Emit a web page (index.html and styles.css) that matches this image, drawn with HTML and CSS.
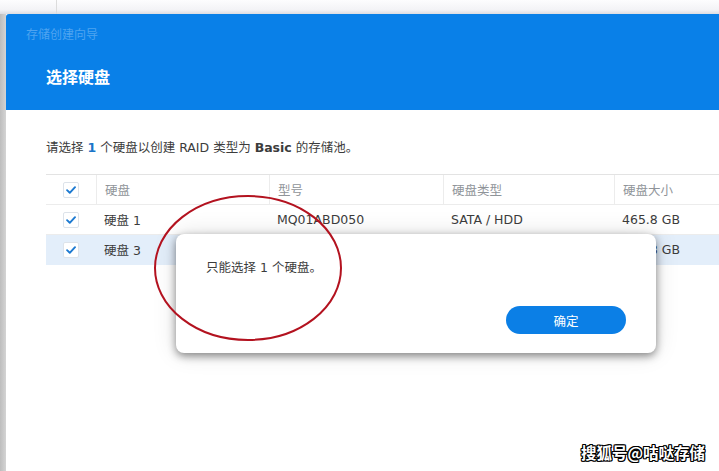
FILE: index.html
```html
<!DOCTYPE html>
<html>
	<head>
		<title>存储创建向导</title>
		<link rel="stylesheet" href="styles.css">
	</head>
	<body>
		<section id="topStrip">
			<div class="stripCell"></div>
		</section>
		<section id="stage">
			<div id="edge"></div>
			<section id="wizard">
				<header id="wizardHeader">
					<div class="wizardName">存储创建向导</div>
					<h1>选择硬盘</h1>
				</header>
				<main id="wizardBody">
					<p class="intro">请选择 <b class="num">1</b> 个硬盘以创建 RAID 类型为 <b>Basic</b> 的存储池。</p>
					<div class="diskTable">
						<div class="row head">
							<div class="cell check"><span class="box"><svg viewBox="0 0 16 16"><path d="M3.5 8.2 L6.6 11.2 L12.6 4.8" /></svg></span></div>
							<div class="cell c1">硬盘</div>
							<div class="cell c2">型号</div>
							<div class="cell c3">硬盘类型</div>
							<div class="cell c4">硬盘大小</div>
						</div>
						<div class="row">
							<div class="cell check"><span class="box"><svg viewBox="0 0 16 16"><path d="M3.5 8.2 L6.6 11.2 L12.6 4.8" /></svg></span></div>
							<div class="cell c1">硬盘 1</div>
							<div class="cell c2">MQ01ABD050</div>
							<div class="cell c3">SATA / HDD</div>
							<div class="cell c4">465.8 GB</div>
						</div>
						<div class="row selected">
							<div class="cell check"><span class="box"><svg viewBox="0 0 16 16"><path d="M3.5 8.2 L6.6 11.2 L12.6 4.8" /></svg></span></div>
							<div class="cell c1">硬盘 3</div>
							<div class="cell c2">MQ01ABD050</div>
							<div class="cell c3">SATA / HDD</div>
							<div class="cell c4">465.8 GB</div>
						</div>
					</div>
				</main>
			</section>
		</section>

		<section id="alertBox">
			<p>只能选择 1 个硬盘。</p>
			<div class="actions">
				<button class="okButton">确定</button>
			</div>
		</section>

		<svg id="markCircle" viewBox="0 0 200 150">
			<ellipse cx="100" cy="75" rx="93" ry="72" />
		</svg>

		<div id="watermark">搜狐号@咕哒存储</div>
	</body>
</html>
```

FILE: styles.css
```css
html, body {
	height: 100%;
}

body {
	margin: 0px;
	padding: 0px;
	font-family: "DejaVu Sans", "Noto Sans CJK SC", sans-serif;
	font-size: 12.5px;
	color: #3c3c3c;
	background-color: #fff;
	display: flex;
	flex-direction: column;
	overflow: hidden;
	position: relative;
}

#topStrip {
	height: 14px;
	flex: none;
	background: linear-gradient(#fdfdfe, #f3f3f6 70%, #dcdde2);
	display: flex;
}

.stripCell {
	width: 56px;
	border-right: 1px solid #dcdcdc;
}

#stage {
	flex: 1 0 auto;
	display: flex;
}

#edge {
	width: 6px;
	flex: none;
	background: linear-gradient(90deg, #bdbdbd, #d4d4d4);
}

#wizard {
	flex: 1;
	display: flex;
	flex-direction: column;
	background-color: #fff;
	border-top-left-radius: 3px;
	overflow: hidden;
}

#wizardHeader {
	background-color: #0980e8;
	height: 96px;
	box-sizing: border-box;
	padding: 12px 0 0 20px;
}

.wizardName {
	font-family: "Noto Sans CJK SC", sans-serif;
	font-size: 12px;
	color: #4fa4f0;
	line-height: 16px;
}

#wizardHeader h1 {
	margin: 24px 0 0 20px;
	font-family: "Noto Sans CJK SC", sans-serif;
	font-size: 16px;
	font-weight: 700;
	color: #fff;
	line-height: 20px;
}

#wizardBody {
	padding: 29px 0 0 40px;
}

.intro {
	margin: 0 0 17px 0;
	line-height: 18px;
}

.intro b {
	font-weight: 700;
}

.intro .num {
	color: #1a75c9;
}

.diskTable {
	border-top: 1px solid #e3e3e3;
}

.row {
	display: flex;
	height: 29px;
	border-bottom: 1px solid #ececec;
	align-items: stretch;
}

.row.selected {
	background-color: #e3eefa;
	border-bottom-color: #e3eefa;
}

.cell {
	display: flex;
	align-items: center;
	padding-left: 8px;
	box-sizing: border-box;
	white-space: nowrap;
}

.row.head .cell {
	color: #8f9499;
	border-left: 1px solid #ececec;
}

.row.head .cell.check {
	border-left: none;
}

.cell.check {
	width: 50px;
	padding-left: 17px;
}

.c1 { width: 173px; }
.c2 { width: 174px; }
.c3 { width: 171px; }
.c4 { flex: 1; }

.box {
	width: 16px;
	height: 16px;
	box-sizing: border-box;
	border: 1px solid #dde3ea;
	border-radius: 2px;
	background-color: #fff;
	display: flex;
}

.box svg {
	width: 14px;
	height: 14px;
}

.box path {
	fill: none;
	stroke: #1d7ad1;
	stroke-width: 2.2;
	stroke-linecap: round;
	stroke-linejoin: round;
}

#alertBox {
	position: absolute;
	left: 176px;
	top: 234px;
	width: 480px;
	height: 119px;
	box-sizing: border-box;
	background-color: #fff;
	border-radius: 8px;
	box-shadow: 0 3px 8px rgba(0,0,0,0.45), 0 0 24px rgba(0,0,0,0.12);
	padding: 25px 30px 19px 30px;
	display: flex;
	flex-direction: column;
	justify-content: space-between;
}

#alertBox p {
	margin: 0;
	line-height: 18px;
}

.actions {
	display: flex;
	justify-content: flex-end;
}

.okButton {
	width: 120px;
	height: 28px;
	border: none;
	border-radius: 14px;
	background-color: #0b7fe6;
	color: #fff;
	font-family: "Noto Sans CJK SC", sans-serif;
	font-size: 12.5px;
}

#markCircle {
	position: absolute;
	left: 148px;
	top: 193px;
	width: 200px;
	height: 150px;
}

#markCircle ellipse {
	fill: none;
	stroke: #b3121f;
	stroke-width: 2;
}

#watermark {
	position: absolute;
	right: 14px;
	bottom: 8px;
	font-family: "Noto Sans CJK SC", sans-serif;
	font-size: 15.5px;
	font-weight: 700;
	color: #fff;
	text-shadow: 1px 1px 0 #000, -1px -1px 0 #000, 1px -1px 0 #000, -1px 1px 0 #000, 0 1px 0 #000, 0 -1px 0 #000, 1px 0 0 #000, -1px 0 0 #000;
}
```
